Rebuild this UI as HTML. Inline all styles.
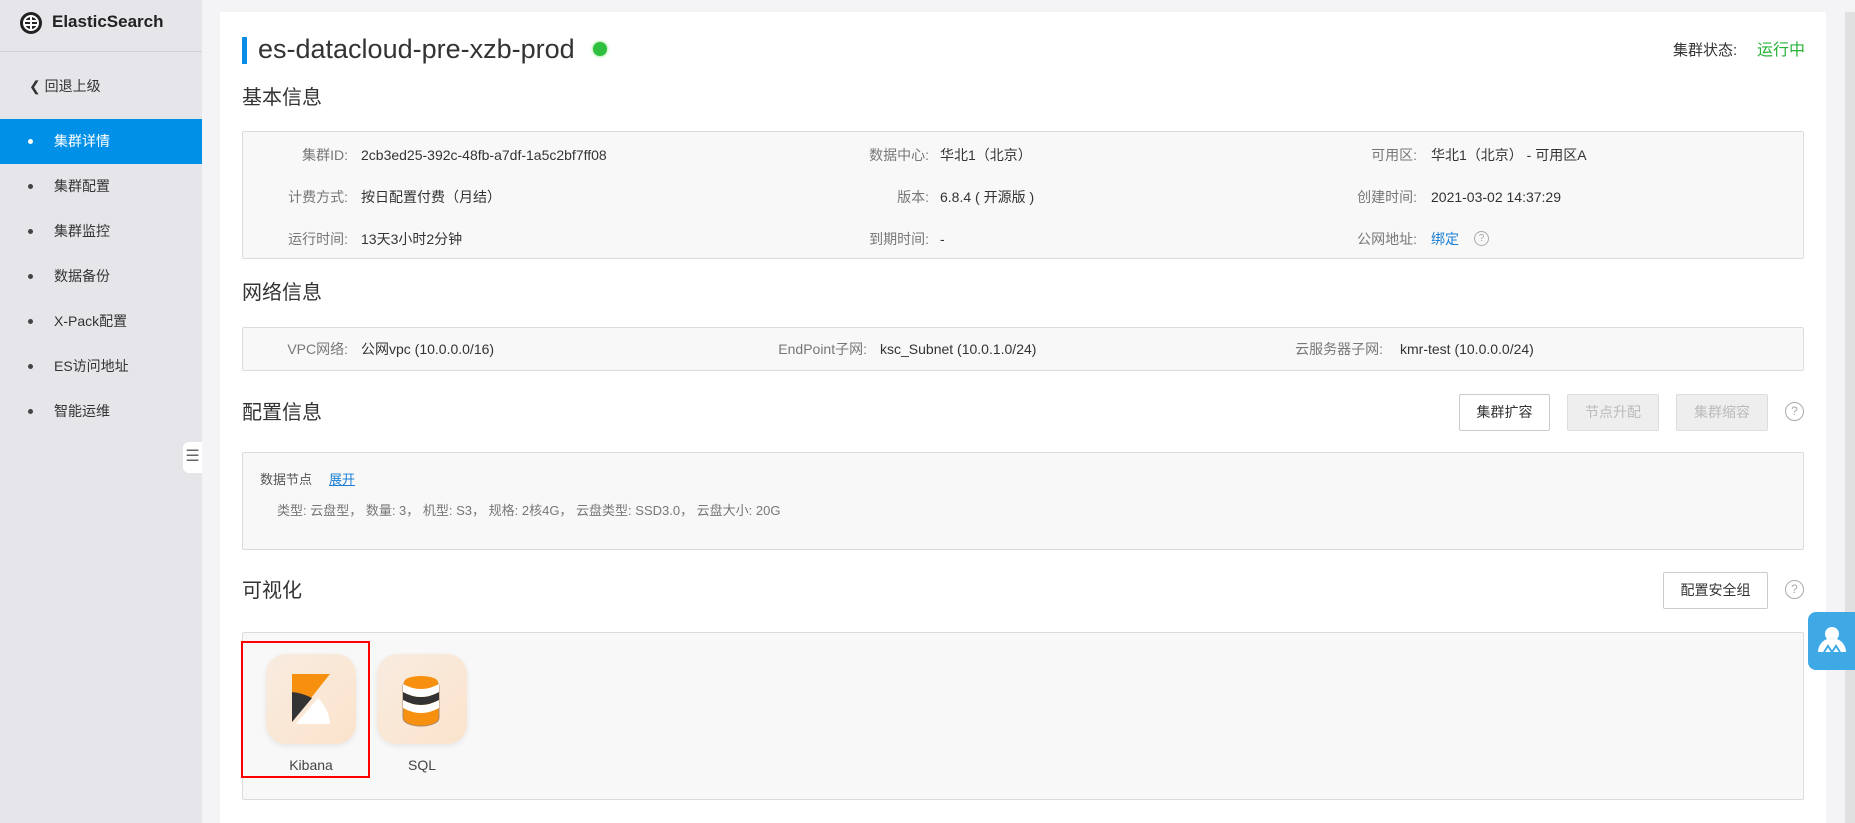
<!DOCTYPE html>
<html><head><meta charset="utf-8"><style>
*{box-sizing:border-box;margin:0;padding:0}
body{width:1855px;height:823px;overflow:hidden;background:#f4f4f6;font-family:"Liberation Sans","Noto Sans CJK SC",sans-serif;color:#333;position:relative}
.a{position:absolute;white-space:nowrap;line-height:20px}
.side{position:absolute;left:0;top:0;width:202px;height:823px;background:#e6e6ea}
.card{position:absolute;left:220px;top:12px;width:1606px;height:811px;background:#fff}
.box{position:absolute;left:242px;width:1562px;background:#f8f8f8;border:1px solid #dcdcdc;border-radius:2px}
.lbl{color:#777;font-size:14px;text-align:right}
.val{color:#333;font-size:14px}
.h{font-size:20px;color:#333;line-height:26px}
.btn{position:absolute;height:37px;border:1px solid #ccc;background:#fff;font-size:14px;text-align:center;line-height:35px;color:#333;border-radius:2px}
.btn.dis{background:#eee;color:#bbb;border-color:#ddd}
.q{position:absolute;width:19px;height:19px;border:1px solid #aaa;border-radius:50%;color:#aaa;font-size:12px;text-align:center;line-height:17px}
.nav{position:absolute;left:0;width:202px;height:45px;font-size:14px;color:#333;line-height:45px}
.nav b{position:absolute;left:28px;top:20px;width:5px;height:5px;border-radius:50%;background:#444}
.nav span{position:absolute;left:54px}
.ic{position:absolute;width:90px;height:90px;border-radius:20px;background:linear-gradient(135deg,#f8ece0,#fbe3cc);box-shadow:0 2px 6px rgba(0,0,0,.08)}
</style></head><body>
<div class="side">
 <svg class="a" style="left:19px;top:11px" width="24" height="24" viewBox="0 0 24 24"><circle cx="12" cy="12" r="11" fill="#222"/><circle cx="12" cy="12" r="7" fill="none" stroke="#fff" stroke-width="2"/><path d="M5 10h14M5 14h14M12 5v14" stroke="#fff" stroke-width="2"/></svg>
 <div class="a" style="left:52px;top:12px;font-size:17px;font-weight:bold;color:#222">ElasticSearch</div>
 <div class="a" style="left:0;top:51px;width:202px;height:1px;background:#d2d2d6"></div>
 <div class="a" style="left:29px;top:76px;font-size:14px;color:#333">&#10094;&nbsp;回退上级</div>
 <div class="nav" style="top:119px;background:#0090e8;color:#fff"><b style="background:#fff"></b><span>集群详情</span></div>
 <div class="nav" style="top:164px"><b></b><span>集群配置</span></div>
 <div class="nav" style="top:209px"><b></b><span>集群监控</span></div>
 <div class="nav" style="top:254px"><b></b><span>数据备份</span></div>
 <div class="nav" style="top:299px"><b></b><span>X-Pack配置</span></div>
 <div class="nav" style="top:344px"><b></b><span>ES访问地址</span></div>
 <div class="nav" style="top:389px"><b></b><span>智能运维</span></div>
 <div class="a" style="left:183px;top:442px;width:19px;height:31px;background:#fff;border-radius:6px 0 0 6px;color:#666;font-size:16px;text-align:center;line-height:30px">☰</div>
</div>
<div class="card"></div>
<div class="a" style="left:242px;top:37px;width:5px;height:27px;background:#0a8de6"></div>
<div class="a" style="left:258px;top:33px;font-size:27px;color:#333;line-height:32px">es-datacloud-pre-xzb-prod</div>
<div class="a" style="left:593px;top:42px;width:14px;height:14px;border-radius:50%;background:#2fbf3f;box-shadow:0 0 3px #6d6"></div>
<div class="a" style="left:1673px;top:41px;font-size:15px;color:#333">集群状态:</div>
<div class="a" style="left:1757px;top:41px;font-size:16px;color:#27b23a">运行中</div>

<div class="a h" style="left:242px;top:85px">基本信息</div>
<div class="box" style="top:131px;height:128px">
 <div class="a lbl" style="right:1455px;top:13px">集群ID:</div><div class="a val" style="left:118px;top:13px">2cb3ed25-392c-48fb-a7df-1a5c2bf7ff08</div>
 <div class="a lbl" style="right:1455px;top:55px">计费方式:</div><div class="a val" style="left:118px;top:55px">按日配置付费（月结）</div>
 <div class="a lbl" style="right:1455px;top:97px">运行时间:</div><div class="a val" style="left:118px;top:97px">13天3小时2分钟</div>
 <div class="a lbl" style="right:874px;top:13px">数据中心:</div><div class="a val" style="left:697px;top:13px">华北1（北京）</div>
 <div class="a lbl" style="right:874px;top:55px">版本:</div><div class="a val" style="left:697px;top:55px">6.8.4 ( 开源版 )</div>
 <div class="a lbl" style="right:874px;top:97px">到期时间:</div><div class="a val" style="left:697px;top:97px">-</div>
 <div class="a lbl" style="right:386px;top:13px">可用区:</div><div class="a val" style="left:1188px;top:13px">华北1（北京） - 可用区A</div>
 <div class="a lbl" style="right:386px;top:55px">创建时间:</div><div class="a val" style="left:1188px;top:55px">2021-03-02 14:37:29</div>
 <div class="a lbl" style="right:386px;top:97px">公网地址:</div><div class="a val" style="left:1188px;top:97px;color:#1a7fd4">绑定</div>
 <div class="q" style="left:1231px;top:99px;width:15px;height:15px;line-height:13px;font-size:10px">?</div>
</div>

<div class="a h" style="left:242px;top:280px">网络信息</div>
<div class="box" style="top:327px;height:44px">
 <div class="a lbl" style="right:1455px;top:11px">VPC网络:</div><div class="a val" style="left:118px;top:11px">公网vpc (10.0.0.0/16)</div>
 <div class="a lbl" style="right:936px;top:11px">EndPoint子网:</div><div class="a val" style="left:637px;top:11px">ksc_Subnet (10.0.1.0/24)</div>
 <div class="a lbl" style="right:420px;top:11px">云服务器子网:</div><div class="a val" style="left:1157px;top:11px">kmr-test (10.0.0.0/24)</div>
</div>

<div class="a h" style="left:242px;top:400px">配置信息</div>
<div class="btn" style="left:1459px;top:394px;width:91px">集群扩容</div>
<div class="btn dis" style="left:1567px;top:394px;width:92px">节点升配</div>
<div class="btn dis" style="left:1676px;top:394px;width:92px">集群缩容</div>
<div class="q" style="left:1785px;top:402px">?</div>
<div class="box" style="top:452px;height:98px">
 <div class="a" style="left:17px;top:17px;font-size:13px;color:#555">数据节点</div>
 <div class="a" style="left:86px;top:17px;font-size:13px;color:#1a7fd4;text-decoration:underline">展开</div>
 <div class="a" style="left:34px;top:48px;font-size:13px;color:#777">类型: 云盘型， 数量: 3， 机型: S3， 规格: 2核4G， 云盘类型: SSD3.0， 云盘大小: 20G</div>
</div>

<div class="a h" style="left:242px;top:578px">可视化</div>
<div class="btn" style="left:1663px;top:572px;width:105px">配置安全组</div>
<div class="q" style="left:1785px;top:580px">?</div>
<div class="box" style="top:632px;height:168px"></div>
<div class="a" style="left:241px;top:641px;width:129px;height:137px;border:2px solid #f00"></div>
<div class="ic" style="left:266px;top:654px"><svg width="90" height="90" viewBox="0 0 90 90"><path d="M26 20h38L26 68z" fill="#f7900e"/><path d="M26 38a55 55 0 0 1 20 6L26 68z" fill="#333"/><path d="M30 70l22-26a40 40 0 0 1 12 26z" fill="#fff"/></svg></div>
<div class="a" style="left:266px;top:755px;width:90px;text-align:center;font-size:14px;color:#444">Kibana</div>
<div class="ic" style="left:377px;top:654px"><svg width="90" height="90" viewBox="0 0 90 90"><rect x="26" y="24" width="36" height="48" rx="18" ry="8" fill="#f7900e" stroke="#a86" stroke-width="1"/><path d="M26 38q18 10 36 0v8q-18 10-36 0z" fill="#333"/><path d="M26 30q18 10 36 0v8q-18 10-36 0zM26 46q18 10 36 0v8q-18 10-36 0z" fill="#fff"/><ellipse cx="44" cy="28" rx="17" ry="6" fill="#f7900e"/></svg></div>
<div class="a" style="left:377px;top:755px;width:90px;text-align:center;font-size:14px;color:#444">SQL</div>

<div class="a" style="left:1845px;top:12px;width:10px;height:811px;background:#e0e0e0"></div>
<div class="a" style="left:1808px;top:612px;width:47px;height:58px;background:#3fa9e6;border-radius:8px 0 0 8px"><svg width="47" height="58" viewBox="0 0 47 58"><path d="M10 40a14 14 0 0 1 28 0z" fill="#fff"/><circle cx="24" cy="22" r="7" fill="#fff"/><path d="M16 40l4-6 4 6 4-6 4 6" stroke="#3fa9e6" stroke-width="2" fill="none"/></svg></div>
</body></html>
